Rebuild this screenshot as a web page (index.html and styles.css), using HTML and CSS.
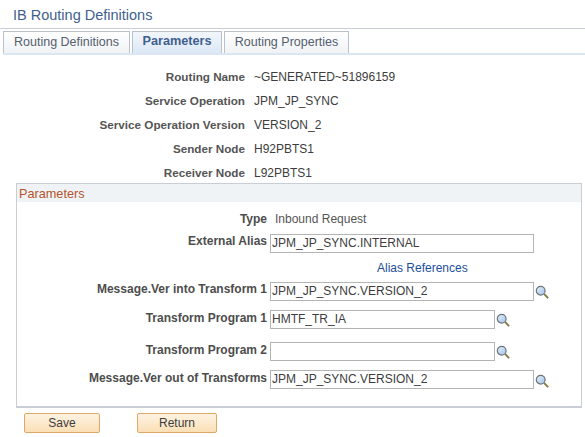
FILE: index.html
```html
<!DOCTYPE html>
<html lang="en">
<head>
    <meta charset="UTF-8">
    <title>IB Routing Definitions</title>
    <link rel="stylesheet" href="styles.css">
</head>
<body>
    <svg class="defs" width="0" height="0">
        <defs>
            <linearGradient id="lens" x1="0" y1="0" x2="1" y2="1">
                <stop offset="0" stop-color="#e8f2fc"/>
                <stop offset="1" stop-color="#9dc3ea"/>
            </linearGradient>
            <symbol id="lookup" viewBox="0 0 16 16">
                <path d="M10.5 10.5L15 15" stroke="#7d7a3c" stroke-width="2.2" fill="none"/>
                <circle cx="6.5" cy="6.5" r="5" fill="url(#lens)" stroke="#6f7478" stroke-width="1.4"/>
            </symbol>
        </defs>
    </svg>

    <h1 class="title">IB Routing Definitions</h1>

    <nav class="tabs">
        <a class="tab tab-first">Routing Definitions</a>
        <a class="tab tab-active">Parameters</a>
        <a class="tab tab-last">Routing Properties</a>
    </nav>

    <section class="summary">
        <div class="row"><label>Routing Name</label><span>~GENERATED~51896159</span></div>
        <div class="row"><label>Service Operation</label><span>JPM_JP_SYNC</span></div>
        <div class="row"><label>Service Operation Version</label><span>VERSION_2</span></div>
        <div class="row"><label>Sender Node</label><span>H92PBTS1</span></div>
        <div class="row"><label>Receiver Node</label><span>L92PBTS1</span></div>
    </section>

    <section class="group">
        <h2>Parameters</h2>
        <div class="field field-type"><label>Type</label><span class="value">Inbound Request</span></div>
        <div class="field field-alias">
            <label>External Alias</label>
            <div class="input input-long">JPM_JP_SYNC.INTERNAL</div>
        </div>
        <a class="alias-link">Alias References</a>
        <div class="field field-in">
            <label>Message.Ver into Transform 1</label>
            <div class="input input-long">JPM_JP_SYNC.VERSION_2</div>
            <svg class="icon"><use href="#lookup"/></svg>
        </div>
        <div class="field field-prog1">
            <label>Transform Program 1</label>
            <div class="input input-short">HMTF_TR_IA</div>
            <svg class="icon"><use href="#lookup"/></svg>
        </div>
        <div class="field field-prog2">
            <label>Transform Program 2</label>
            <div class="input input-short"></div>
            <svg class="icon"><use href="#lookup"/></svg>
        </div>
        <div class="field field-out">
            <label>Message.Ver out of Transforms</label>
            <div class="input input-long">JPM_JP_SYNC.VERSION_2</div>
            <svg class="icon"><use href="#lookup"/></svg>
        </div>
    </section>

    <div class="buttons">
        <button class="btn btn-save">Save</button>
        <button class="btn btn-return">Return</button>
    </div>
</body>
</html>
```

FILE: styles.css
```css
* {
    padding: 0;
    margin: 0;
    box-sizing: border-box;
}
body {
    width: 585px;
    height: 437px;
    overflow: hidden;
    background-color: #fff;
    font-family: "Liberation Sans", Arial, sans-serif;
    font-size: 12px;
    color: #3d3d3d;
}
.defs {
    position: absolute;
}
.title {
    height: 29px;
    padding: 6px 0 0 13px;
    border-bottom: 1px solid #c9ced6;
    font-size: 14.5px;
    line-height: 18px;
    font-weight: normal;
    color: #3f5f8f;
}
.tabs {
    display: flex;
    height: 24px;
    margin: 2px 0 0 3px;
    gap: 2px;
    border-bottom: 2px solid #dbe6f3;
}
.tab {
    height: 22px;
    padding-top: 3px;
    border: 1px solid #b9c2cc;
    border-bottom: none;
    background: linear-gradient(#fff, #f0f2f5);
    text-align: center;
    font-size: 12.5px;
    color: #54606e;
}
.tab-first {
    width: 127px;
}
.tab-active {
    width: 90px;
    padding-top: 2px;
    background: linear-gradient(#f2f6fb, #dce8f6);
    font-size: 12.7px;
    font-weight: bold;
    color: #3f5f8f;
}
.tab-last {
    width: 125px;
}
.summary {
    margin-top: 14px;
}
.row {
    display: flex;
    height: 24px;
    line-height: 16px;
}
.row label {
    width: 245px;
    text-align: right;
    font-size: 11.7px;
    font-weight: bold;
    color: #555;
}
.row span {
    margin-left: 9px;
}
.group {
    width: 566px;
    height: 225px;
    margin: -6px 0 0 16px;
    border: 1px solid #c9ced6;
    border-bottom-width: 2px;
}
.group h2 {
    height: 18px;
    padding-left: 2px;
    background-color: #eff3f6;
    font-size: 12.7px;
    line-height: 20px;
    font-weight: normal;
    color: #b5532a;
}
.field {
    display: flex;
    align-items: flex-start;
    line-height: 16px;
}
.field label {
    width: 250px;
    text-align: right;
    font-weight: bold;
    color: #4d4d4d;
}
.field .value {
    margin-left: 8px;
    color: #555;
}
.input {
    height: 19px;
    margin-left: 3px;
    padding-left: 1px;
    border: 1px solid #b4b4b4;
    line-height: 17px;
    background-color: #fff;
}
.field-alias .input,
.field-in .input {
    margin-top: 1px;
}
.input-long {
    width: 264px;
}
.input-short {
    width: 225px;
}
.icon {
    width: 14px;
    height: 14px;
    margin: 3px 0 0 1px;
}
.field-in .icon,
.field-out .icon {
    margin-top: 4px;
}
.field-type {
    margin-top: 9px;
}
.field-alias {
    margin-top: 6px;
}
.alias-link {
    display: block;
    height: 16px;
    margin: 7px 0 0 360px;
    line-height: 16px;
    color: #1c4e9c;
}
.field-in {
    margin-top: 5px;
}
.field-prog1 {
    margin-top: 9px;
}
.field-prog2 {
    margin-top: 13px;
}
.field-out {
    margin-top: 9px;
}
.buttons {
    display: flex;
    margin: 5px 0 0 24px;
    gap: 37px;
}
.btn {
    height: 20px;
    border: 1px solid #e0a868;
    border-radius: 2px;
    background: linear-gradient(#fdf3e2, #fbdfb6);
    font-family: inherit;
    font-size: 12px;
    color: #3d3d3d;
}
.btn-save {
    width: 76px;
}
.btn-return {
    width: 80px;
}
```
